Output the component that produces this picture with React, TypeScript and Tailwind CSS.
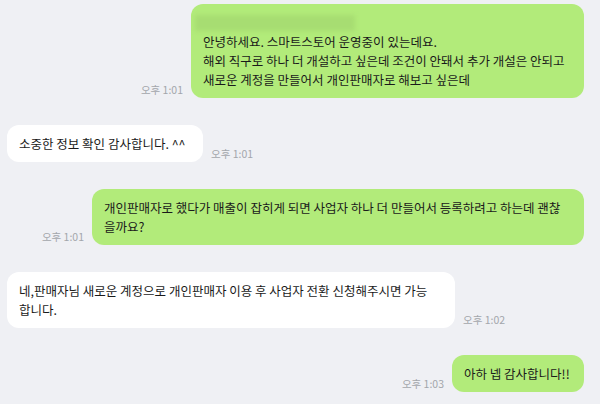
import React from 'react';

type Msg = {
  mine: boolean;
  lines: string[];
  time: string;
  width: string;
  blurred?: boolean;
};

const messages: Msg[] = [
  {
    mine: true,
    blurred: true,
    width: 'w-[393px]',
    time: '오후 1:01',
    lines: [
      '안녕하세요. 스마트스토어 운영중이 있는데요.',
      '해외 직구로 하나 더 개설하고 싶은데 조건이 안돼서 추가 개설은 안되고',
      '새로운 계정을 만들어서 개인판매자로 해보고 싶은데',
    ],
  },
  {
    mine: false,
    width: 'w-[196px]',
    time: '오후 1:01',
    lines: ['소중한 정보 확인 감사합니다. ^^'],
  },
  {
    mine: true,
    width: 'w-[492px]',
    time: '오후 1:01',
    lines: [
      '개인판매자로 했다가 매출이 잡히게 되면 사업자 하나 더 만들어서 등록하려고 하는데 괜찮',
      '을까요?',
    ],
  },
  {
    mine: false,
    width: 'w-[448px]',
    time: '오후 1:02',
    lines: [
      '네,판매자님 새로운 계정으로 개인판매자 이용 후 사업자 전환 신청해주시면 가능',
      '합니다.',
    ],
  },
  {
    mine: true,
    width: 'w-[132px]',
    time: '오후 1:03',
    lines: ['아하 넵 감사합니다!!'],
  },
];

const Bubble: React.FC<{ msg: Msg }> = ({ msg }) => {
  const time = (
    <span className="text-[10.5px] leading-[14px] text-[#a3a6ab] whitespace-nowrap mb-[1px]">
      {msg.time}
    </span>
  );
  return (
    <div className={`flex items-end gap-[8px] ${msg.mine ? 'justify-end' : 'justify-start'}`}>
      {msg.mine && time}
      <div
        className={`${msg.width} rounded-[12px] px-3 py-[9px] text-[12.5px] leading-[19px] text-[#1a1a1a] ${
          msg.mine ? 'bg-[#b2eb7a]' : 'bg-white'
        }`}
      >
        {msg.blurred && (
          <div className="h-[19px] flex items-center -ml-[8px]">
            <div className="w-[160px] h-[16px] bg-[#a7dd72] blur-[2px]" />
          </div>
        )}
        {msg.lines.map((line, i) => (
          <div key={i} className="whitespace-nowrap">
            {line}
          </div>
        ))}
      </div>
      {!msg.mine && time}
    </div>
  );
};

export default function App() {
  return (
    <div
      className="w-[600px] h-[404px] overflow-hidden bg-[#eff0f4] pt-[4px] pl-[7px] pr-[16px] flex flex-col gap-[27px]"
      style={{ fontFamily: '"Noto Sans CJK KR", "Noto Sans", sans-serif' }}
    >
      {messages.map((m, i) => (
        <Bubble key={i} msg={m} />
      ))}
    </div>
  );
}
